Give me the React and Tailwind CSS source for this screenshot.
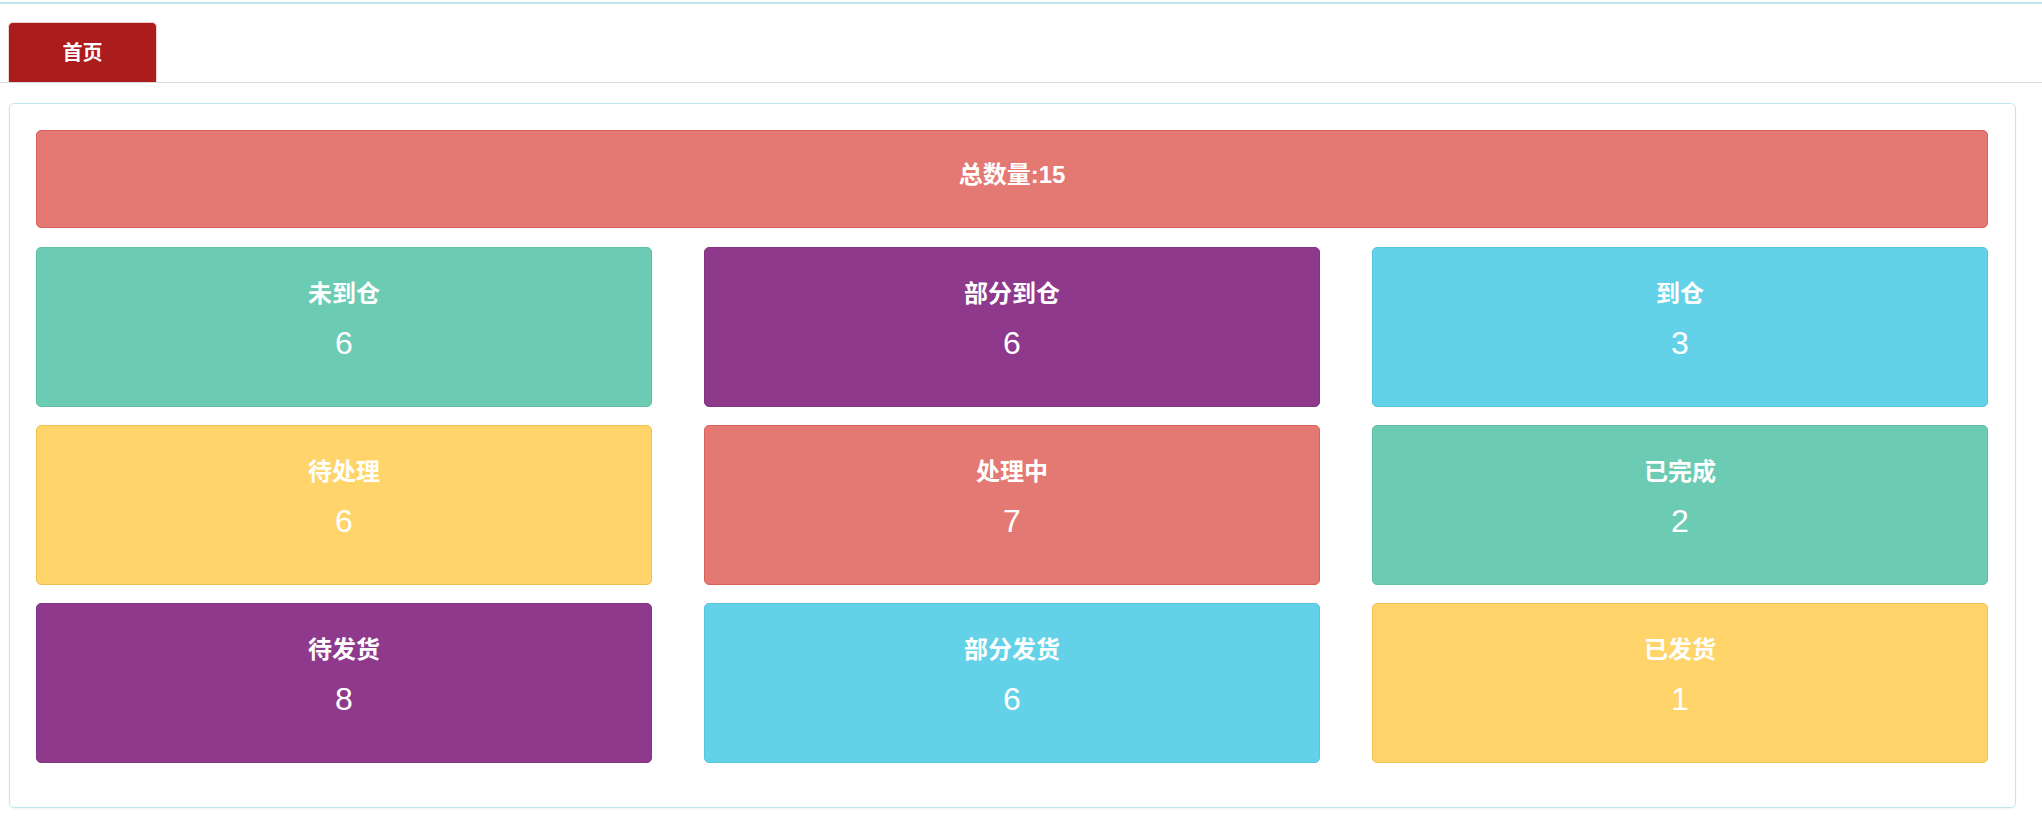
import React from "react";

const cards = [
  { label: "未到仓", value: "6", cls: "bg-[#6ccbb3] border-[#5fbfa6]" },
  { label: "部分到仓", value: "6", cls: "bg-[#8e398c] border-[#823382]" },
  { label: "到仓", value: "3", cls: "bg-[#63d2e8] border-[#55c5dc]" },
  { label: "待处理", value: "6", cls: "bg-[#fed46b] border-[#f0c04f]" },
  { label: "处理中", value: "7", cls: "bg-[#e47872] border-[#d9625c]" },
  { label: "已完成", value: "2", cls: "bg-[#6ccbb3] border-[#5fbfa6]" },
  { label: "待发货", value: "8", cls: "bg-[#8e398c] border-[#823382]" },
  { label: "部分发货", value: "6", cls: "bg-[#63d2e8] border-[#55c5dc]" },
  { label: "已发货", value: "1", cls: "bg-[#fed46b] border-[#f0c04f]" },
];

export default function App() {
  return (
    <div
      className="w-[2042px] h-[818px] bg-white overflow-hidden"
      style={{ fontFamily: '"Liberation Sans", "Noto Sans CJK SC", sans-serif' }}
    >
      <div className="pt-[2px]">
        <div className="h-[2px] bg-[#bfe8ec]" />
      </div>
      <div className="pt-[18px] pl-[8px] border-b border-[#dcdcdc] flex">
        <div className="w-[149px] h-[60px] bg-[#ab1c1c] rounded-t-[5px] border border-b-0 border-[#f3d3d3] flex items-center justify-center text-white font-bold text-[20px]">
          首页
        </div>
      </div>
      <div className="mt-[20px] ml-[9px] mr-[26px] border border-[#bfe8ec] rounded-[5px] shadow-[0_1px_2px_rgba(0,0,0,0.05)] pt-[26px] pl-[26px] pr-[27px] pb-[44px]">
        <div className="h-[98px] bg-[#e47872] border border-[#d9605a] rounded-[5px] flex items-center justify-center pb-[8px] text-white font-bold text-[24px]">
          总数量:15
        </div>
        <div className="mt-[19px] grid grid-cols-3 gap-x-[52px] gap-y-[18px]">
          {cards.map((c, i) => (
            <div
              key={i}
              className={`h-[160px] border rounded-[5px] flex flex-col items-center pt-[28px] text-white ${c.cls}`}
            >
              <div className="text-[24px] font-bold leading-[36px]">{c.label}</div>
              <div className="mt-[7px] text-[32px] leading-[48px]">{c.value}</div>
            </div>
          ))}
        </div>
      </div>
    </div>
  );
}
